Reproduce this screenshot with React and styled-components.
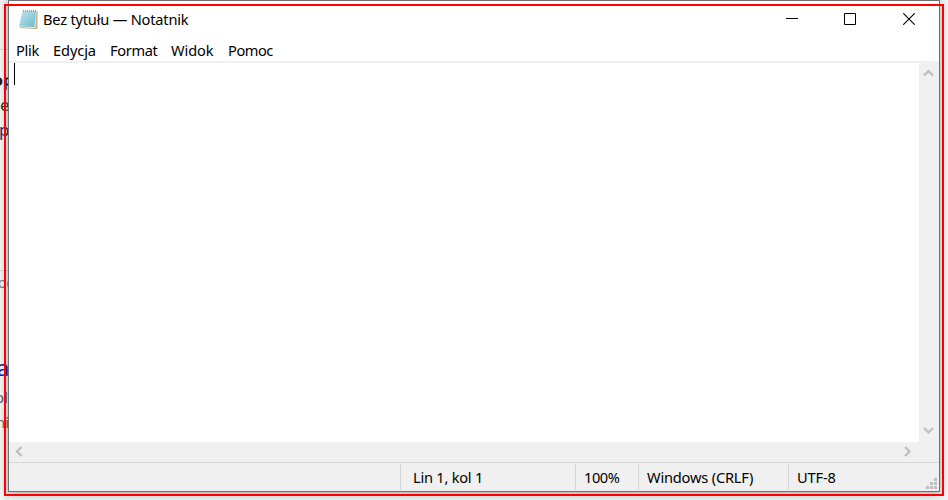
import React from "react";
import styled, { createGlobalStyle } from "styled-components";

const GlobalStyle = createGlobalStyle`
  * { box-sizing: border-box; }
  body { margin: 0; overflow: hidden; }
`;

const Desktop = styled.div`
  position: relative;
  width: 948px;
  height: 500px;
  padding-left: 8px;
  overflow: hidden;
  background: #f2f3f5;
  font-family: "Noto Sans", "Open Sans", sans-serif;
  color: #000;
`;

const Backdrop = styled.div`
  position: absolute;
  inset: 0 auto 0 0;
  width: 9px;
  overflow: hidden;
  background: linear-gradient(90deg, #f4f5f7, #e6e8ea);
`;

const Fragment = styled.span`
  position: absolute;
  left: ${(p) => p.$x}px;
  top: ${(p) => p.$y}px;
  line-height: 24px;
  font-size: ${(p) => p.$size}px;
  font-weight: ${(p) => p.$weight || 400};
  color: ${(p) => p.$color};
`;

const Rule = styled.div`
  position: absolute;
  left: 0;
  top: ${(p) => p.$y}px;
  width: 9px;
  height: 1px;
  background: #d5d6d8;
`;

const Window = styled.main`
  position: relative;
  display: flex;
  flex-direction: column;
  width: 932px;
  height: 492px;
  border: 1px solid #707173;
  background: #fff;
  box-shadow: 0 2px 9px rgba(0, 0, 0, 0.32);
`;

const TitleBar = styled.header`
  display: flex;
  align-items: center;
  height: 37px;
  padding: 0 0 2px 9px;
`;

const Label = styled.span`
  display: block;
  width: ${(p) => p.$w}px;
  font-size: 14.6px;
  line-height: 20px;
  letter-spacing: ${(p) => p.$ls || 0}px;
  white-space: nowrap;
`;

const Title = styled(Label)`
  margin-left: 4px;
`;

const Controls = styled.div`
  display: flex;
  margin-left: auto;
`;

const ControlButton = styled.button`
  display: flex;
  align-items: center;
  justify-content: center;
  width: ${(p) => p.$w}px;
  height: 34px;
  padding: 0;
  border: 0;
  background: none;
`;

const MenuBar = styled.nav`
  display: flex;
  gap: 14px;
  height: 23px;
  padding: 2px 0 0 7px;
`;

const Editor = styled.section`
  display: grid;
  grid-template: 379px 20px / 910px 20px;
  border-top: 2px solid #f0f0f0;
`;

const Page = styled.div`
  padding-left: 5px;
`;

const Caret = styled.div`
  width: 1px;
  height: 22px;
  background: #000;
`;

const VerticalScroll = styled.div`
  display: flex;
  flex-direction: column;
  justify-content: space-between;
  align-items: center;
  padding: 5px 1px 6px 0;
  background: #f0f0f0;
`;

const HorizontalScroll = styled.div`
  grid-column: 1 / 3;
  display: flex;
  justify-content: space-between;
  align-items: center;
  padding: 0 26px 1px 5px;
  background: #f0f0f0;
`;

const StatusBar = styled.footer`
  display: grid;
  grid-template-columns: 391px 175px 63px 150px 1fr;
  height: 29px;
  padding-top: 1px;
  border-top: 1px solid #d7d7d7;
  background: #f0f0f0;
`;

const StatusCell = styled.div`
  height: 26px;
  padding: 3px 0 0 ${(p) => p.$pad}px;
  border-left: ${(p) => (p.$first ? 0 : "1px solid #d7d7d7")};
`;

const Grip = styled.svg`
  position: absolute;
  right: 2px;
  bottom: 2px;
`;

const Highlight = styled.div`
  position: absolute;
  left: 4px;
  top: 4px;
  width: 940px;
  height: 492px;
  border: 2px solid #fe0000;
  pointer-events: none;
`;

const arrows = {
  up: "M1 7.5 5.5 3 10 7.5",
  down: "M1 3 5.5 7.5 10 3",
  left: "M7.5 1 3 5.5 7.5 10",
  right: "M3 1 7.5 5.5 3 10",
};

function Arrow({ dir }) {
  return (
    <svg width="11" height="11" viewBox="0 0 11 11" fill="none">
      <path d={arrows[dir]} stroke="#bdbdbd" strokeWidth="2.2" />
    </svg>
  );
}

function NotepadIcon() {
  return (
    <svg width="21" height="22" viewBox="0 0 21 22">
      <defs>
        <linearGradient id="sheet" x1="0" y1="0" x2="1" y2="1">
          <stop offset="0" stopColor="#c5e8f0" />
          <stop offset="0.5" stopColor="#9bd2e0" />
          <stop offset="1" stopColor="#6bb5c9" />
        </linearGradient>
      </defs>
      <path d="M5 3h14.5v17.5L17.5 21 2 20z" fill="#c3ae83" />
      <path d="M5 3h13.5l-1 16.5L16 20 1 19z" fill="#f2efe2" />
      <path d="M4.5 3h13.8l-2 16L1 18.5z" fill="url(#sheet)" />
      <path d="m4 6 13.5.2M3.7 8.5l13.5.2M3.3 11l13.5.2M2.8 13.5l13.5.2M2.3 16l13.5.2" stroke="#86c4d3" strokeWidth=".4" />
      <path d="M5.5 1.8v2.2M7.5 1.8v2.2M9.5 1.8v2.2M11.5 1.8v2.2M13.5 1.8v2.2M15.5 1.8v2.2M17.5 1.8v2.2" stroke="#8b9294" strokeWidth=".8" />
    </svg>
  );
}

const menus = [
  { text: "Plik", w: 23, ls: -0.25 },
  { text: "Edycja", w: 43, ls: -0.1 },
  { text: "Format", w: 47, ls: -0.35 },
  { text: "Widok", w: 43, ls: -0.1 },
  { text: "Pomoc", w: 46, ls: -0.45 },
];

const fragments = [
  { text: "op", x: -7, y: 68, size: 16, weight: 700, color: "#1d1d1f" },
  { text: "e", x: 0, y: 93, size: 17, color: "#333" },
  { text: "p", x: -1, y: 118, size: 17, color: "#252d70" },
  { text: "oc", x: -2, y: 271, size: 14, color: "#777" },
  { text: "a", x: -3, y: 355, size: 22, color: "#1a1a9a" },
  { text: "oli", x: -5, y: 385, size: 15, color: "#555" },
  { text: "ni", x: -4, y: 410, size: 15, color: "#666" },
];

export default function App() {
  return (
    <Desktop>
      <GlobalStyle />
      <Backdrop>
        <Rule $y={49} />
        <Rule $y={270} />
        {fragments.map((f) => (
          <Fragment key={f.text} $x={f.x} $y={f.y} $size={f.size} $weight={f.weight} $color={f.color}>
            {f.text}
          </Fragment>
        ))}
      </Backdrop>
      <Window>
        <TitleBar>
          <NotepadIcon />
          <Title $w={160} $ls={-0.19}>Bez tytułu — Notatnik</Title>
          <Controls>
            <ControlButton $w={58} aria-label="Minimalizuj">
              <svg width="12" height="12"><path d="M0 5.5h12" stroke="#000" /></svg>
            </ControlButton>
            <ControlButton $w={58} aria-label="Maksymalizuj">
              <svg width="12" height="12"><path d="M.5.5h11v11H.5z" fill="none" stroke="#000" /></svg>
            </ControlButton>
            <ControlButton $w={60} aria-label="Zamknij">
              <svg width="12" height="12"><path d="m.3.3 11.4 11.4M11.7.3.3 11.7" stroke="#000" strokeWidth="1.1" /></svg>
            </ControlButton>
          </Controls>
        </TitleBar>
        <MenuBar>
          {menus.map((m) => (
            <Label key={m.text} $w={m.w} $ls={m.ls}>{m.text}</Label>
          ))}
        </MenuBar>
        <Editor>
          <Page><Caret /></Page>
          <VerticalScroll><Arrow dir="up" /><Arrow dir="down" /></VerticalScroll>
          <HorizontalScroll><Arrow dir="left" /><Arrow dir="right" /></HorizontalScroll>
        </Editor>
        <StatusBar>
          <StatusCell $first $pad={0} />
          <StatusCell $pad={12}><Label $ls={-0.23}>Lin 1, kol 1</Label></StatusCell>
          <StatusCell $pad={8}><Label $ls={-0.45}>100%</Label></StatusCell>
          <StatusCell $pad={8}><Label $ls={-0.18}>Windows (CRLF)</Label></StatusCell>
          <StatusCell $pad={8}><Label $ls={-0.12}>UTF-8</Label></StatusCell>
        </StatusBar>
        <Grip width="11" height="11" fill="#bfbfbf">
          <path d="M8 0h3v3H8zM4 4h3v3H4zM8 4h3v3H8zM0 8h3v3H0zM4 8h3v3H4zM8 8h3v3H8z" />
        </Grip>
      </Window>
      <Highlight />
    </Desktop>
  );
}
